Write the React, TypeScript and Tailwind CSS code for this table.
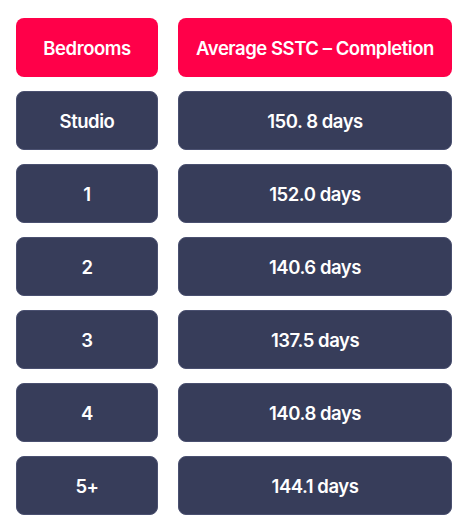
import { Fragment } from "react";

const rows = [
  { beds: "Studio", days: "150. 8 days" },
  { beds: "1", days: "152.0 days" },
  { beds: "2", days: "140.6 days" },
  { beds: "3", days: "137.5 days" },
  { beds: "4", days: "140.8 days" },
  { beds: "5+", days: "144.1 days" },
];

function Cell({ children, head }: { children: React.ReactNode; head?: boolean }) {
  return (
    <div
      className={`flex h-[59px] items-center justify-center rounded-lg pt-[3px] text-[18.5px] font-semibold tracking-[-0.025em] text-white ${
        head ? "bg-[#ff0049]" : "bg-[#373d5a] border border-[#4a5070]"
      }`}
    >
      {children}
    </div>
  );
}

export default function App() {
  return (
    <div
      className="h-[532px] w-[468px] bg-white pl-4 pr-4 pt-[18px]"
      style={{ fontFamily: "Inter, 'Noto Sans', sans-serif" }}
    >
      <div className="grid w-[436px] grid-cols-[142px_274px] gap-x-5 gap-y-[14px]">
        <Cell head>Bedrooms</Cell>
        <Cell head>Average SSTC – Completion</Cell>
        {rows.map((r) => (
          <Fragment key={r.beds}>
            <Cell>{r.beds}</Cell>
            <Cell>{r.days}</Cell>
          </Fragment>
        ))}
      </div>
    </div>
  );
}
